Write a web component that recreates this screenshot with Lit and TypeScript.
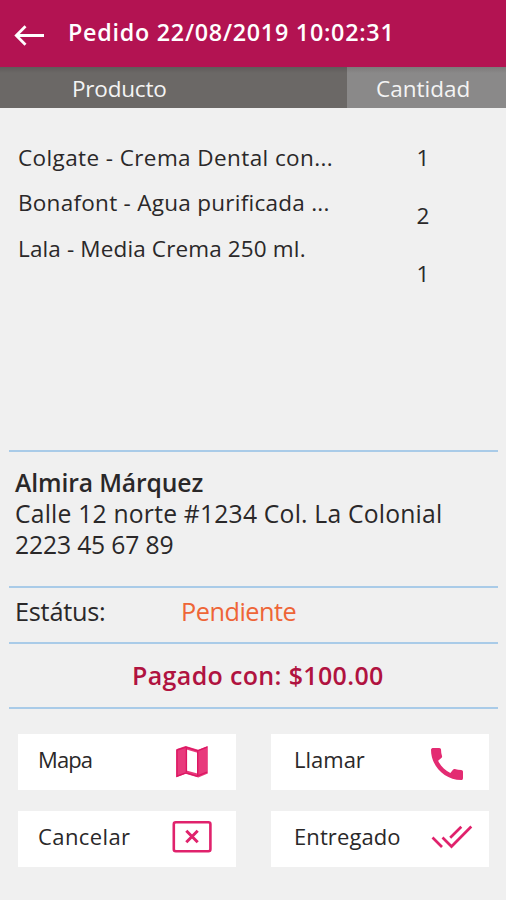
import { LitElement, html, css, svg } from "lit";
import { customElement } from "lit/decorators.js";

const icons = {
  map: svg`<svg width="38" height="38" viewBox="0 0 38 38">
    <path fill="#e83a7c" d="M3.2 6.2 12.6 3 25.3 6.7 34.8 3V30.6L25.3 34.4 12.6 30.8 3.2 34.2Z"/>
    <path fill="#fff" d="M13.4 6.5 24.4 9.8V30.6L13.4 27.4Z"/>
    <path fill="none" stroke="#dc1763" stroke-width="1.4" d="M4 7V33.2L13.1 29.9M4 7 13.1 4.2 24.7 7.8 34 4.2M24.7 7.8V32.8L34 29.2M13.1 29.9 24.7 33.4M13.4 5V29"/>
  </svg>`,
  cancel: svg`<svg width="40" height="34" viewBox="0 0 40 34">
    <rect x="1.8" y="2.3" width="36.6" height="29" rx="2" fill="none" stroke="#e0226c" stroke-width="2.6"/>
    <path fill="none" stroke="#e0226c" stroke-width="3" d="M14.3 10.8 25.7 22.2M25.7 10.8 14.3 22.2"/>
  </svg>`,
  phone: svg`<svg width="32" height="32" viewBox="3 3 18 18">
    <path fill="#e32b72" d="M20.01 15.38c-1.23 0-2.42-.2-3.53-.56-.35-.12-.74-.03-1.01.24l-1.57 1.97c-2.83-1.35-5.48-3.9-6.89-6.83l1.95-1.66c.27-.28.35-.67.24-1.02-.37-1.11-.56-2.3-.56-3.53 0-.54-.45-.99-.99-.99H4.19C3.65 3 3 3.24 3 3.99 3 13.28 10.73 21 20.01 21c.71 0 .99-.63.99-1.18v-3.45c0-.54-.45-.99-.99-.99z"/>
  </svg>`,
  done: svg`<svg width="42" height="24" viewBox="0 0 42 24">
    <path fill="none" stroke="#e0226c" stroke-width="2.7" d="M1.5 12.5 11 22M11.5 12.5 20.5 21.5 40.3 1.5M19.2 12.8 30.3 1.7"/>
  </svg>`,
};

@customElement("app-root")
export class AppRoot extends LitElement {
  static styles = css`
    :host {
      display: flex;
      flex-direction: column;
      width: 506px;
      height: 900px;
      overflow: hidden;
      background: #f0f0f0;
      color: #2a2829;
      font: 22.5px "Open Sans", "Noto Sans", sans-serif;
      white-space: nowrap;
    }
    * { box-sizing: border-box; }
    svg { display: block; flex: none; }
    .bar {
      height: 67px;
      flex: none;
      display: flex;
      align-items: flex-start;
      padding: 0 0 0 14px;
      background: #b31352;
      color: #fff;
    }
    .back { margin-top: 24px; }
    .title {
      margin-left: 23px;
      font-size: 23.3px;
      font-weight: 600;
      line-height: 64px;
      letter-spacing: 0.75px;
    }
    .head {
      height: 41px;
      flex: none;
      display: grid;
      grid-template: 41px / 347px 1fr;
      line-height: 43px;
      letter-spacing: -0.2px;
      color: #f4f4f4;
    }
    .prod { padding-left: 72px; background: linear-gradient(#5f5b5a, #6b6866 6px); }
    .qty { padding-left: 29px; letter-spacing: 0; background: linear-gradient(#7c7a7a, #8a8989 6px); }
    .list {
      height: 342px;
      flex: none;
      display: grid;
      grid-template-columns: 409px 1fr;
      align-items: start;
    }
    .names { padding: 27px 0 0 18px; line-height: 45.4px; }
    .n0 { letter-spacing: 0.4px; }
    .n1 { letter-spacing: 0.27px; }
    .n2 { letter-spacing: 0.14px; }
    .counts { width: 28px; padding-top: 21px; line-height: 58px; text-align: center; }
    .box { margin: 0 8px 0 9px; border-top: 2px solid #a9cbe8; flex: none; }
    .client { height: 136px; padding: 16px 0 0 6px; font-size: 24.7px; line-height: 30.8px; }
    .name { font-weight: 600; letter-spacing: -0.12px; }
    .addr { letter-spacing: 0.2px; }
    .tel { letter-spacing: -0.15px; }
    .status {
      height: 56px;
      padding-left: 6px;
      display: grid;
      grid-template: 48px / 166px 1fr;
      font-size: 25.3px;
      line-height: 46px;
      letter-spacing: -0.25px;
    }
    .pending { color: #ee6537; letter-spacing: -0.5px; }
    .paid {
      height: 65px;
      padding-left: 123px;
      font-size: 25px;
      font-weight: 600;
      line-height: 63px;
      letter-spacing: 0.35px;
      color: #b01340;
    }
    .actions {
      padding: 25px 8px 0 9px;
      display: grid;
      grid-template-columns: 218px 218px;
      grid-auto-rows: 56px;
      gap: 21px 35px;
    }
    .btn {
      display: flex;
      justify-content: space-between;
      align-items: center;
      padding: 0 25px 0 20px;
      background: #fff;
      font-size: 22px;
      line-height: 51px;
    }
    .map { letter-spacing: -0.9px; }
    .cancel { padding-right: 24px; letter-spacing: 0.4px; }
    .call { padding: 0 26px 0 23px; }
    .done { padding: 0 16px 0 23px; letter-spacing: 0.1px; }
    .label { align-self: flex-start; }
    .call svg { margin-top: 3px; }
    .cancel svg, .done svg { margin-bottom: 4px; }
  `;

  render() {
    return html`
      <div class="bar">
        <svg class="back" width="31" height="22" viewBox="0 0 31 22">
          <path fill="none" stroke="#fff" stroke-width="2.8" d="M30 11.5H2.5M11.5 2.2 2.3 11.5 11.5 20.8" />
        </svg>
        <span class="title">Pedido 22/08/2019 10:02:31</span>
      </div>
      <div class="head"><div class="prod">Producto</div><div class="qty">Cantidad</div></div>
      <div class="list">
        <div class="names">
          <div class="n0">Colgate - Crema Dental con...</div>
          <div class="n1">Bonafont - Agua purificada ...</div>
          <div class="n2">Lala - Media Crema 250 ml.</div>
        </div>
        <div class="counts"><div>1</div><div>2</div><div>1</div></div>
      </div>
      <div class="box client">
        <div class="name">Almira Márquez</div>
        <div class="addr">Calle 12 norte #1234 Col. La Colonial</div>
        <div class="tel">2223 45 67 89</div>
      </div>
      <div class="box status"><span>Estátus:</span><span class="pending">Pendiente</span></div>
      <div class="box paid">Pagado con: $100.00</div>
      <div class="box actions">
        <div class="btn map"><span class="label">Mapa</span>${icons.map}</div>
        <div class="btn call"><span class="label">Llamar</span>${icons.phone}</div>
        <div class="btn cancel"><span class="label">Cancelar</span>${icons.cancel}</div>
        <div class="btn done"><span class="label">Entregado</span>${icons.done}</div>
      </div>
    `;
  }
}
